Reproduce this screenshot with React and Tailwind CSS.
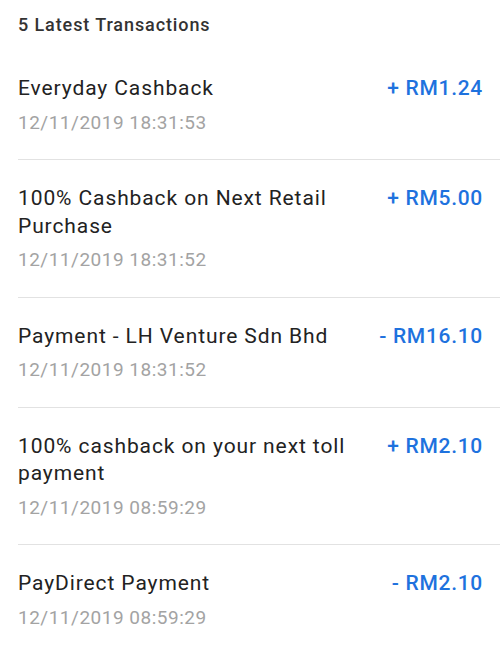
const TRANSACTIONS = [
    { title: "Everyday Cashback", date: "12/11/2019 18:31:53", amount: "+ RM1.24" },
    { title: "100% Cashback on Next Retail Purchase", date: "12/11/2019 18:31:52", amount: "+ RM5.00" },
    { title: "Payment - LH Venture Sdn Bhd", date: "12/11/2019 18:31:52", amount: "- RM16.10" },
    { title: "100% cashback on your next toll payment", date: "12/11/2019 08:59:29", amount: "+ RM2.10" },
    { title: "PayDirect Payment", date: "12/11/2019 08:59:29", amount: "- RM2.10" },
];

export default function App() {
    return (
        <div className="w-[500px] h-[650px] bg-white overflow-hidden font-['Roboto',sans-serif]">
            {/* Header */}
            <div className="pl-[18px] pt-[14px] h-[50px] text-[18px] leading-[22px] tracking-[0.9px] font-medium text-[#333]">
                5 Latest Transactions
            </div>

            {TRANSACTIONS.map((t, i) => (
                <div
                    key={i}
                    className={
                        i > 0
                            ? "ml-[18px] border-t border-[#e2e2e2] pt-[25px] pb-[24.5px] pr-[17px] flex justify-between gap-4"
                            : "ml-[18px] pt-[25px] pb-[24.5px] pr-[17px] flex justify-between gap-4"
                    }
                >
                    <div className="flex flex-col gap-[8px] max-w-[350px]">
                        <span className="text-[21px] leading-[27.5px] tracking-[0.9px] text-[#222]">{t.title}</span>
                        <span className="text-[19px] leading-[24px] tracking-[0.5px] text-[#a3a3a3]">{t.date}</span>
                    </div>
                    <span className="text-[21px] leading-[27.5px] tracking-[0.7px] font-medium text-[#1e72de] whitespace-nowrap">
                        {t.amount}
                    </span>
                </div>
            ))}
        </div>
    );
}
